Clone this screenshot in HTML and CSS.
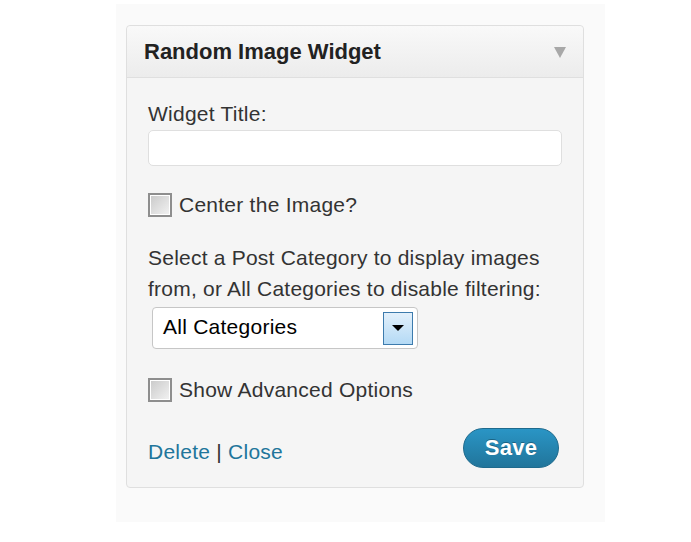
FILE: index.html
```html
<!DOCTYPE html>
<html>
<head>
  <title>Random Image Widget</title>
  <link rel="stylesheet" href="styles.css">
</head>
<body>
  <div class="sidebar">
    <div class="widget">
      <div class="widget-top">
        <h3>Random Image Widget</h3>
        <span class="toggle"></span>
      </div>
      <form class="widget-inside">
        <label for="title" class="field-label">Widget Title:</label>
        <input type="text" id="title" class="text-field">

        <label class="check-row">
          <input type="checkbox" class="check">
          <span>Center the Image?</span>
        </label>

        <p class="help">Select a Post Category to display images from, or All Categories to disable filtering:</p>
        <div class="select-box">
          <span class="select-value">All Categories</span>
          <span class="select-arrow"></span>
        </div>

        <label class="check-row advanced">
          <input type="checkbox" class="check">
          <span>Show Advanced Options</span>
        </label>

        <div class="widget-control">
          <div class="links">
            <a href="#">Delete</a> | <a href="#">Close</a>
          </div>
          <button type="button" class="save">Save</button>
        </div>
      </form>
    </div>
  </div>
</body>
</html>
```

FILE: styles.css
```css
body {
  margin: 0;
  background: #fff;
  font-family: "Liberation Sans", Arial, sans-serif;
  color: #333;
}
.sidebar {
  margin: 4px 0 0 116px;
  width: 468px;
  height: 497px;
  padding: 21px 11px 0 10px;
  background: #fafafa;
}
.widget {
  width: 458px;
  box-sizing: border-box;
  border: 1px solid #dfdfdf;
  border-radius: 4px;
  background: #f5f5f5;
}
.widget-top {
  height: 51px;
  display: flex;
  align-items: center;
  justify-content: space-between;
  padding: 0 17px 0 17px;
  border-bottom: 1px solid #dfdfdf;
  border-radius: 4px 4px 0 0;
  background: linear-gradient(#f9f9f9, #ececec);
}
.widget-top h3 {
  margin: 1px 0 0;
  font-size: 22px;
  font-weight: bold;
  color: #222;
}
.toggle {
  width: 0;
  height: 0;
  border-left: 6px solid transparent;
  border-right: 6px solid transparent;
  border-top: 11px solid #a8a8a8;
  margin-top: 2px;
}
.widget-inside {
  padding: 24px 21px 19px 21px;
  font-size: 21px;
  letter-spacing: 0.25px;
}
.field-label {
  display: block;
  line-height: 22px;
  padding-top: 1px;
  margin-bottom: -1px;
}
.text-field {
  display: block;
  box-sizing: border-box;
  width: 414px;
  height: 36px;
  margin-top: 6px;
  border: 1px solid #dfdfdf;
  border-radius: 5px;
  background: #fff;
}
.check-row {
  display: flex;
  align-items: center;
  gap: 7px;
  height: 24px;
  margin-top: 27px;
  line-height: 24px;
}
.check {
  appearance: none;
  -webkit-appearance: none;
  margin: 0;
  width: 24px;
  height: 24px;
  box-sizing: border-box;
  border: 2px solid #8e8e8e;
  box-shadow: inset 0 0 0 1px #fff;
  background: linear-gradient(135deg, #c9c9c9, #f3f3f3);
}
.help {
  margin: 25px 0 0;
  line-height: 31px;
  letter-spacing: 0.22px;
}
.select-box {
  display: flex;
  align-items: center;
  justify-content: space-between;
  box-sizing: border-box;
  width: 266px;
  height: 42px;
  margin: 3px 0 0 4px;
  padding: 0 4px 0 10px;
  border: 1px solid #c6c6c6;
  border-radius: 4px;
  background: #fff;
  color: #000;
}
.select-value {
  margin-top: -3px;
}
.select-arrow {
  position: relative;
  width: 30px;
  height: 33px;
  box-sizing: border-box;
  border: 1px solid #3d7bad;
  background: linear-gradient(#e3f0fb, #b4daf5);
}
.select-arrow::after {
  content: "";
  position: absolute;
  left: 8px;
  top: 12px;
  border-left: 6px solid transparent;
  border-right: 6px solid transparent;
  border-top: 6px solid #000;
}
.advanced {
  margin-top: 29px;
}
.widget-control {
  display: flex;
  align-items: center;
  justify-content: space-between;
  margin-top: 26px;
  padding-right: 3px;
}
.links {
  padding-top: 8px;
}
.links a {
  color: #21759b;
  text-decoration: none;
}
.save {
  width: 96px;
  height: 40px;
  border: 1px solid #1e6a8d;
  border-radius: 20px;
  background: linear-gradient(#2a95c5, #21759b);
  color: #fff;
  font-family: "Liberation Sans", Arial, sans-serif;
  font-size: 22px;
  letter-spacing: 0.3px;
  font-weight: bold;
  text-shadow: 0 -1px 0 rgba(0, 0, 0, 0.3);
  cursor: pointer;
}
```
